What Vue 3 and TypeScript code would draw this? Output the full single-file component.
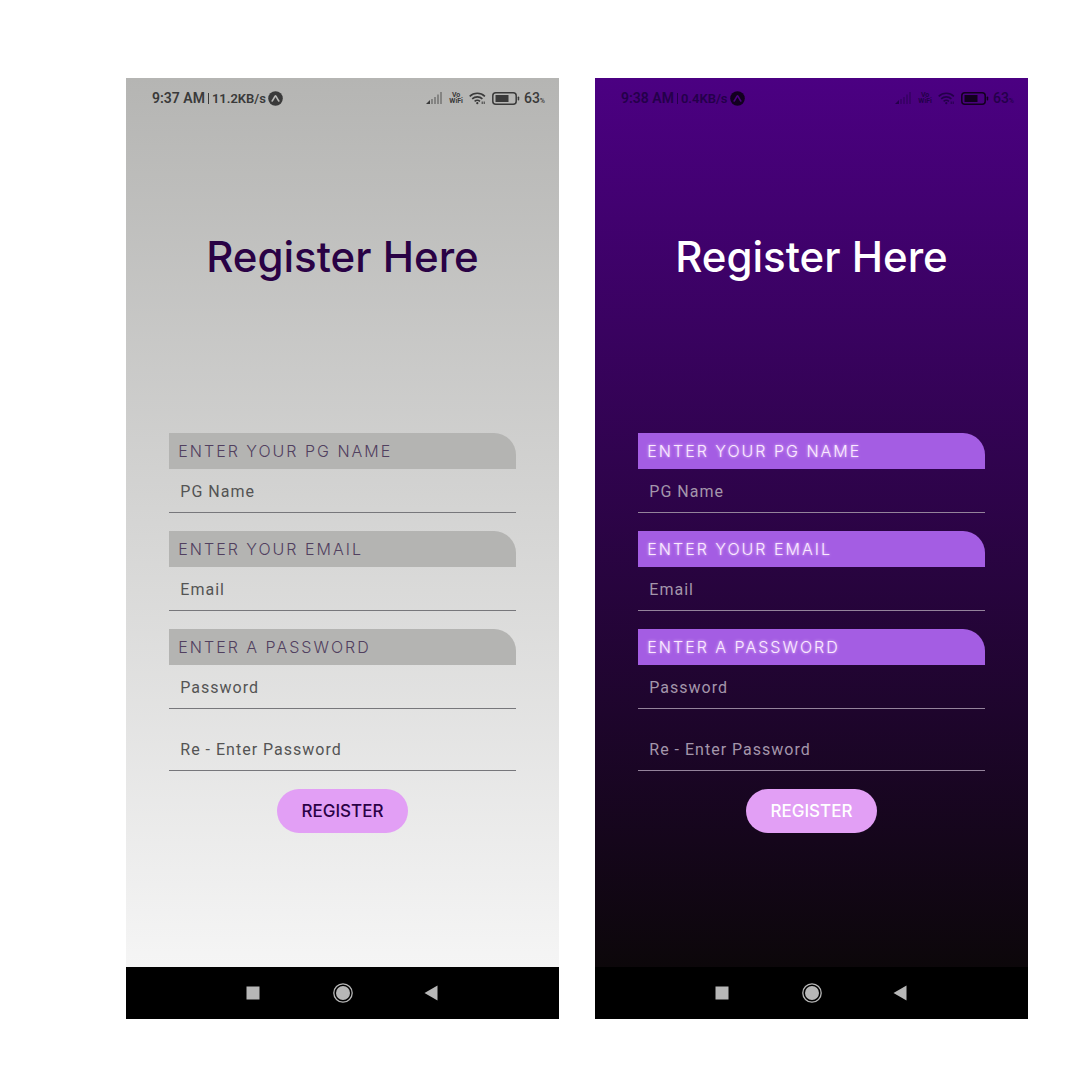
<script setup lang="ts">
interface Field {
  id: string
  label?: string
  placeholder: string
  type: string
}

interface Screen {
  theme: 'light' | 'dark'
  time: string
  speed: string
}

const screens: Screen[] = [
  { theme: 'light', time: '9:37 AM', speed: '11.2KB/s' },
  { theme: 'dark', time: '9:38 AM', speed: '0.4KB/s' },
]

const fields: Field[] = [
  { id: 'name', label: 'ENTER YOUR PG NAME', placeholder: 'PG Name', type: 'text' },
  { id: 'email', label: 'ENTER YOUR EMAIL', placeholder: 'Email', type: 'email' },
  { id: 'password', label: 'ENTER A PASSWORD', placeholder: 'Password', type: 'password' },
  { id: 'confirm', placeholder: 'Re - Enter Password', type: 'password' },
]
</script>

<template>
  <main class="board">
    <section v-for="s in screens" :key="s.theme" class="phone" :class="s.theme">
      <div class="screen">
        <header class="status">
          <div class="status-left">
            <span class="time">{{ s.time }}</span>
            <span class="divider"></span>
            <span class="speed">{{ s.speed }}</span>
            <svg class="logo" viewBox="0 0 16 16" width="15" height="15" aria-hidden="true">
              <circle cx="8" cy="8" r="7.8" fill="currentColor" />
              <path class="logo-mark" d="M4.4 10.7C5.8 9.2 6.6 6.6 8 5.1c1.400 1.500 2.200 4.100 3.600 5.600" fill="none" stroke-width="1.700" stroke-linecap="round" stroke-linejoin="round" />
            </svg>
          </div>
          <div class="status-right">
            <svg class="signal" viewBox="0 0 17 12" width="17" height="12" fill="currentColor" aria-hidden="true">
              <path d="M0 12 4 8V12z" />
              <g opacity=".4">
                <rect x="5" y="7" width="2" height="5" />
                <rect x="8" y="5" width="2" height="7" />
                <rect x="11" y="2.500" width="2" height="9.500" />
                <rect x="14" y="0" width="2" height="12" />
              </g>
            </svg>
            <span class="vowifi"><span>Vo</span><span>WiFi</span></span>
            <svg class="wifi" viewBox="0 0 17 13" width="17" height="13" fill="none" stroke="currentColor" stroke-width="1.600" aria-hidden="true">
              <path d="M.7 4.300c4.300-4 10.900-4 15.200 0M3.200 6.900c2.900-2.700 7.300-2.700 10.200 0M5.600 9.300c1.600-1.300 3.800-1.300 5.400 0" />
              <circle cx="8.300" cy="11.200" r="1.100" fill="currentColor" stroke="none" />
              <path d="M13.200 12V9.500M15.200 9.500V12" stroke-width="1" />
            </svg>
            <svg class="battery" viewBox="0 0 28 13" width="28" height="13" aria-hidden="true">
              <rect x=".8" y=".8" width="23.400" height="11.400" rx="3" fill="none" stroke="currentColor" stroke-width="1.500" />
              <rect x="3.500" y="3" width="13" height="7" fill="currentColor" />
              <rect x="25.700" y="4.500" width="1.500" height="4" rx=".7" fill="currentColor" />
            </svg>
            <span class="level">63<small>%</small></span>
          </div>
        </header>

        <h1>Register Here</h1>

        <form @submit.prevent>
          <div v-for="f in fields" :key="f.id" class="field">
            <label v-if="f.label" :for="`${s.theme}-${f.id}`">{{ f.label }}</label>
            <input :id="`${s.theme}-${f.id}`" :type="f.type" :placeholder="f.placeholder" :aria-label="f.label ? undefined : f.placeholder" />
          </div>
          <button class="submit" type="submit">REGISTER</button>
        </form>
      </div>

      <nav class="keys" aria-label="System navigation">
        <button type="button" aria-label="Recent apps">
          <svg viewBox="0 0 20 20" width="20" height="20"><rect x="3.500" y="3.500" width="13" height="13" fill="currentColor" /></svg>
        </button>
        <button type="button" aria-label="Home">
          <svg viewBox="0 0 20 20" width="20" height="20">
            <circle cx="10" cy="10" r="9.200" fill="none" stroke="currentColor" stroke-width="1.300" />
            <circle cx="10" cy="10" r="7" fill="currentColor" />
          </svg>
        </button>
        <button type="button" aria-label="Back">
          <svg viewBox="0 0 20 20" width="20" height="20"><path d="M1.500 10 14.500 2.500v15z" fill="currentColor" /></svg>
        </button>
      </nav>
    </section>
  </main>
</template>

<style>
body {
  margin: 0;
  background: #fff;
}
</style>

<style scoped>
.board {
  display: grid;
  grid-template-columns: 1fr 1fr;
  gap: 36px;
  padding: 78px 52px 61px 126px;
}

.phone {
  --ink: #2a0245;
  --status: #3a3a3a;
  --label-bg: #b4b4b2;
  --label-ink: #51405f;
  --hint: #545454;
  --line: #77777b;
  --mark: #b8b8b6;
  display: flex;
  flex-direction: column;
  font-family: Roboto, sans-serif;
}

.light .screen {
  background: linear-gradient(#b5b5b3, #f5f5f5);
}

.dark {
  --ink: #fff;
  --status: #24004a;
  --label-bg: #a45de3;
  --label-ink: #fbeaff;
  --hint: #a496ab;
  --line: #94839b;
  --mark: #4b0082;
}

.dark .screen {
  background: linear-gradient(#4b0082, #0c070a);
}

.screen {
  padding-bottom: 134px;
}

.status {
  display: flex;
  justify-content: space-between;
  align-items: center;
  height: 40px;
  padding: 0 14px 0 26px;
  color: var(--status);
}

.status-left,
.status-right {
  display: flex;
  align-items: center;
}

.time,
.speed {
  font-size: 14px;
  font-weight: 600;
}

.speed {
  font-size: 13px;
}

.divider {
  width: 1px;
  height: 11px;
  margin: 0 3px;
  background: currentColor;
}

.logo {
  margin-left: 2px;
}

.dark .logo,
.dark .battery {
  color: #12001f;
}

.logo-mark {
  stroke: var(--mark);
}

.status-right {
  gap: 6px;
}

.vowifi {
  display: flex;
  flex-direction: column;
  align-items: center;
  font-size: 7px;
  font-weight: 700;
  line-height: 6px;
}

.level {
  font-size: 14px;
  font-weight: 500;
  margin-left: -2px;
}

.level small {
  font-size: 7px;
}

h1 {
  margin: 111px 0 0;
  color: var(--ink);
  font: 500 42px/56px Inter, sans-serif;
  text-align: center;
}

form {
  display: flex;
  flex-direction: column;
  gap: 18px;
  padding: 148px 10% 0;
}

.field {
  display: flex;
  flex-direction: column;
}

label {
  padding: 0 9px;
  border-radius: 0 22px 0 0;
  background: var(--label-bg);
  color: var(--label-ink);
  font: 300 16px/36px Inter, sans-serif;
  letter-spacing: 2px;
}

.dark label {
  text-shadow: 0 0 3px #e9c8ff;
}

input {
  box-sizing: border-box;
  width: 100%;
  height: 44px;
  padding: 2px 11px 0;
  border: 0;
  border-bottom: 1px solid var(--line);
  border-radius: 0;
  background: transparent;
  color: var(--ink);
  font: 400 16px Roboto, sans-serif;
  letter-spacing: 1px;
}

input::placeholder {
  color: var(--hint);
  opacity: 1;
}

.submit {
  align-self: center;
  height: 44px;
  padding: 0 25px;
  border: 0;
  border-radius: 22px;
  background: #e29ff5;
  color: var(--ink);
  font: 500 17px Inter, sans-serif;
}

.keys {
  display: flex;
  justify-content: center;
  align-items: center;
  gap: 70px;
  height: 52px;
  background: #000;
}

.keys button {
  display: flex;
  padding: 0;
  border: 0;
  background: none;
  color: #b7b7b7;
}
</style>
